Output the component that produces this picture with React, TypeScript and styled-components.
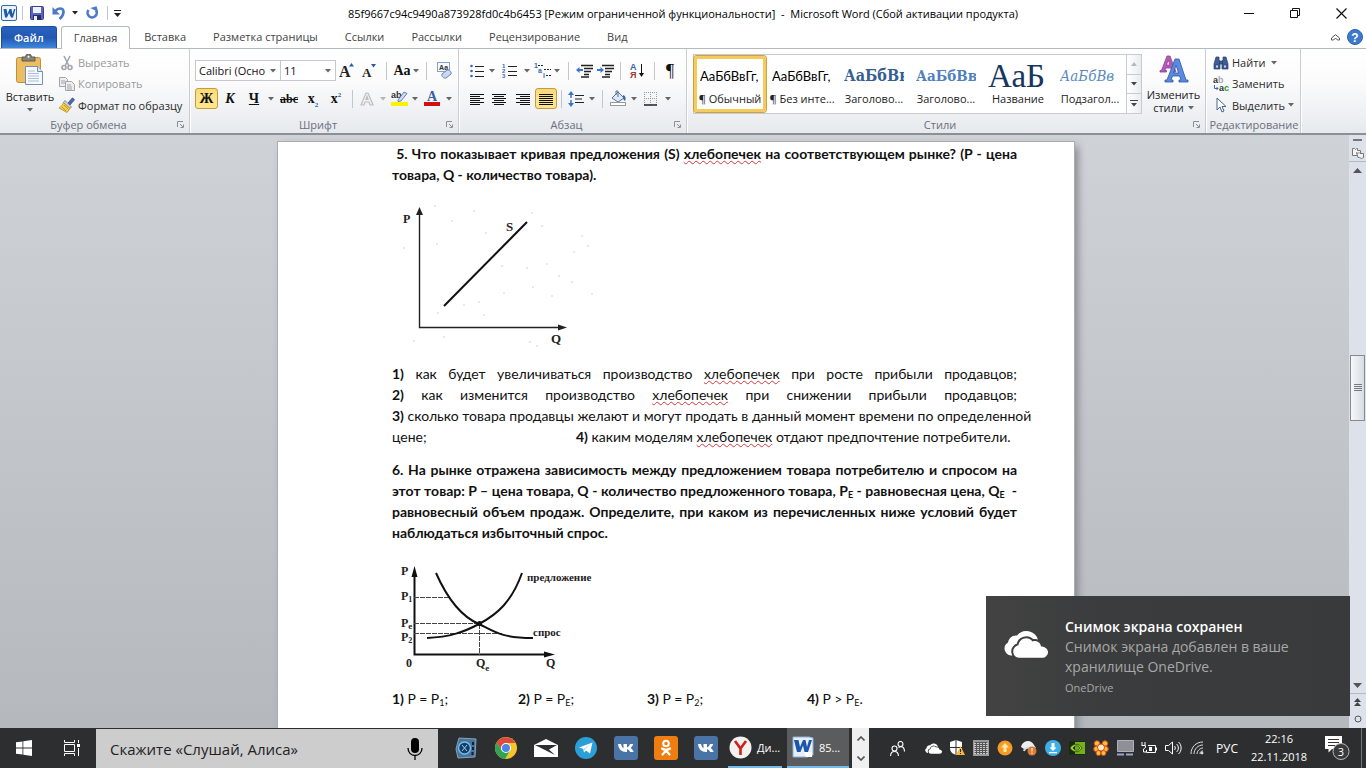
import React from 'react';
import styled, { createGlobalStyle, css } from 'styled-components';

const Global = createGlobalStyle`
  * { box-sizing: border-box; }
  html, body { margin: 0; padding: 0; }
  body { font-family: "Open Sans", "Noto Sans", sans-serif; font-size: 11px; color: #222; overflow: hidden; }
  button, select, input { font: inherit; color: inherit; margin: 0; padding: 0; border: 0; background: none; outline: 0; }
  svg { display: block; flex: none; }
`;

const Screen = styled.div`
  position: relative;
  display: flex;
  flex-direction: column;
  height: 100vh;
  background: #fff;
`;

/* ---------- title bar ---------- */
const TitleBar = styled.header`
  display: grid;
  grid-template-columns: 1fr auto 1fr;
  align-items: center;
  height: 26px;
`;
const QuickAccess = styled.div`
  display: flex;
  align-items: center;
  gap: 4px;
  padding-left: 1px;
  height: 22px;
`;
const IconButton = styled.button<{ $w?: number; $h?: number }>`
  display: flex;
  align-items: center;
  justify-content: center;
  width: ${p => p.$w ?? 22}px;
  height: ${p => p.$h ?? 22}px;
`;
const Title = styled.h1`
  margin: 0;
  font-size: 11px;
  font-weight: 400;
  color: #000;
  white-space: pre;
`;
const WindowButtons = styled.div`
  display: flex;
  justify-content: flex-end;
  padding-right: 2px;
`;
const Divider = styled.span<{ $h?: number; $w?: number }>`
  display: flex;
  justify-content: center;
  width: ${p => p.$w ?? 8}px;
  height: ${p => p.$h ?? 18}px;
  &::before { content: ""; width: 1px; height: 100%; background: #c3c7cd; }
`;

/* ---------- tabs ---------- */
const TabBar = styled.nav`
  display: flex;
  align-items: stretch;
  height: 23px;
  padding-left: 1px;
  border-bottom: 1px solid #b4b9bf;
`;
const Tab = styled.button<{ $kind?: 'file' | 'active' }>`
  padding: 0 13px 0 14px;
  color: #444;
  line-height: 22px;
  font-size: 11px;
  ${p => p.$kind === 'file' && css`
    margin-right: 4px;
    padding: 0 12px;
    color: #fff;
    font-weight: 600;
    border-radius: 3px 3px 0 0;
    border: 1px solid #1c4ea5;
    border-bottom: 0;
    background: linear-gradient(#2a63bd, #2057b3 50%, #3f86dd);
  `}
  ${p => p.$kind === 'active' && css`
    margin-bottom: -1px;
    padding: 0 12px;
    border: 1px solid #b4b9bf;
    border-bottom: 0;
    border-radius: 3px 3px 0 0;
    background: #fff;
  `}
`;
const TabEnd = styled.div`
  display: flex;
  align-items: center;
  gap: 7px;
  margin-left: auto;
  padding-right: 3px;
`;

/* ---------- ribbon ---------- */
const Ribbon = styled.section`
  display: flex;
  height: 86px;
  background: linear-gradient(#fff, #fbfbfc 40%, #e6e9ed);
  border-bottom: 2px solid #8b9097;
`;
const Group = styled.div<{ $w: number }>`
  display: flex;
  flex-direction: column;
  flex: none;
  width: ${p => p.$w}px;
  border-right: 1px solid #c9cdd2;
  box-shadow: 1px 0 0 #fff;
`;
const GroupBody = styled.div<{ $pad?: number }>`
  display: flex;
  flex: 1;
  min-height: 0;
  padding-left: ${p => p.$pad ?? 6}px;
`;
const GroupFoot = styled.div<{ $plain?: boolean }>`
  display: flex;
  align-items: center;
  height: 17px;
  padding: ${p => (p.$plain ? '0 0 0 2px' : '0 5px 0 0')};
  color: #6a6f7c;
  span { flex: 1; text-align: center; white-space: nowrap; }
`;
const Rows = styled.div`
  display: flex;
  flex-direction: column;
  gap: 7px;
  padding-top: 11px;
`;
const Row = styled.div`
  display: flex;
  align-items: center;
  height: 21px;
`;
const Tool = styled.button<{ $w: number; $on?: boolean }>`
  display: flex;
  align-items: center;
  justify-content: center;
  gap: 2px;
  flex: none;
  width: ${p => p.$w}px;
  height: 21px;
  color: #111;
  ${p => p.$on && css`
    border: 1px solid #c29b3c;
    border-radius: 3px;
    background: linear-gradient(#fbd978, #fce48c 50%, #ffe789);
  `}
`;
const Glyph = styled.span<{ $size: number; $bold?: boolean; $italic?: boolean; $line?: string }>`
  font-family: "Liberation Serif", serif;
  font-size: ${p => p.$size}px;
  line-height: 18px;
  font-weight: ${p => (p.$bold ? 700 : 400)};
  font-style: ${p => (p.$italic ? 'italic' : 'normal')};
  text-decoration: ${p => p.$line ?? 'none'};
  sub, sup { font-size: 7px; line-height: 0; color: #2a5db0; }
`;
const Combo = styled.label<{ $w: number }>`
  display: flex;
  align-items: center;
  width: ${p => p.$w}px;
  height: 21px;
  padding: 0 4px 0 3px;
  border: 1px solid #c5c9ce;
  background: #fff;
  & + & { border-left: 0; }
  select { appearance: none; flex: 1; min-width: 0; height: 19px; color: #111; overflow: hidden; }
`;
const PasteButton = styled.button`
  display: flex;
  flex-direction: column;
  align-items: center;
  width: 58px;
  padding-top: 5px;
  line-height: 15px;
  font-size: 11px;
  gap: 4px;
`;
const Commands = styled.div`
  display: flex;
  flex-direction: column;
  padding-top: 3px;
`;
const Command = styled.button<{ $off?: boolean }>`
  display: flex;
  align-items: center;
  gap: 3px;
  height: 22px;
  white-space: nowrap;
  color: ${p => (p.$off ? '#9a9a9a' : '#2b2b2b')};
`;
const Gallery = styled.div`
  display: flex;
  flex: none;
  width: 449px;
  height: 60px;
  margin-top: 5px;
  border: 1px solid #c8ccd1;
  background: #fff;
`;
const StyleItem = styled.button<{ $on?: boolean }>`
  display: flex;
  flex-direction: column;
  align-items: center;
  flex: none;
  width: 72px;
  height: 56px;
  margin-top: 1px;
  padding-top: 3px;
  border: 3px solid transparent;
  ${p => p.$on && css`
    border-color: #f5cb5c;
    border-radius: 3px;
    box-shadow: inset 0 0 0 1px #fff, 0 0 0 1px #c9a24a;
  `}
`;
const Preview = styled.span<{ $font?: string; $size?: number; $color?: string; $bold?: boolean; $italic?: boolean }>`
  width: 60px;
  height: 28px;
  line-height: 28px;
  overflow: hidden;
  white-space: nowrap;
  text-align: left;
  font-family: ${p => p.$font ?? 'Lato, sans-serif'};
  font-size: ${p => p.$size ?? 13}px;
  color: ${p => p.$color ?? '#000'};
  font-weight: ${p => (p.$bold ? 700 : 400)};
  font-style: ${p => (p.$italic ? 'italic' : 'normal')};
`;
const StyleName = styled.span`
  line-height: 18px;
  text-align: center;
  white-space: nowrap;
  font-size: 11px;
`;
const GalleryScroll = styled.div`
  display: flex;
  flex-direction: column;
  margin-left: auto;
  width: 15px;
  border-left: 1px solid #c8ccd1;
  button { flex: 1; display: flex; align-items: center; justify-content: center; background: linear-gradient(90deg, #fff, #e9ecef); }
  button + button { border-top: 1px solid #c8ccd1; }
`;
const ChangeStyles = styled.button`
  display: flex;
  flex-direction: column;
  align-items: center;
  flex: 1;
  padding-top: 6px;
  font-size: 11px;
`;
const Caption = styled.span<{ $top?: boolean }>`
  display: flex;
  align-items: center;
  gap: 4px;
  margin-top: ${p => (p.$top ? 4 : -2)}px;
  line-height: 15px;
`;

/* ---------- document ---------- */
const Workspace = styled.main`
  display: flex;
  flex: 1;
  min-height: 0;
  background: linear-gradient(#cfd2d7, #b5b9be);
`;
const Canvas = styled.div`
  flex: 1;
  min-width: 0;
  overflow: hidden;
  padding: 7px 0 0 3px;
`;
const Page = styled.article`
  width: 796px;
  min-height: 100%;
  margin: 0 auto;
  padding: 1px 56px 40px 114px;
  background: #fff;
  box-shadow: 0 0 0 1px #a9adb2, 4px 4px 8px 0 #84888d;
  font-family: Lato, Carlito, sans-serif;
  font-size: 14px;
  line-height: 21px;
  color: #111;
`;
const Para = styled.div<{ $bold?: boolean; $spaced?: boolean }>`
  width: 625px;
  padding-top: ${p => (p.$spaced ? 12 : 0)}px;
  font-weight: ${p => (p.$bold ? 700 : 400)};
  sub { font-size: 9px; line-height: 0; vertical-align: -2px; }
`;
const Line = styled.div<{ $end?: boolean }>`
  white-space: nowrap;
  height: 21px;
  text-align-last: ${p => (p.$end ? 'left' : 'justify')};
`;
const Cell = styled.span<{ $w: number }>`
  display: inline-block;
  width: ${p => p.$w}px;
`;
const Misspelt = styled.span`
  text-decoration: underline wavy #d8373b 1px;
  text-underline-offset: 1px;
  text-decoration-skip-ink: none;
`;
const Figure = styled.figure<{ $h: number }>`
  margin: 0;
  padding-top: 1px;
  height: ${p => p.$h}px;
  text { font-family: "Liberation Serif", serif; font-weight: 700; fill: #222; }
`;
const ScrollTrack = styled.aside`
  display: flex;
  flex-direction: column;
  align-items: center;
  width: 17px;
  background: #dce1ea;
`;
const ScrollThumb = styled.div`
  display: flex;
  flex-direction: column;
  align-items: center;
  justify-content: center;
  gap: 1px;
  width: 15px;
  height: 66px;
  border: 1px solid #858a92;
  background: linear-gradient(90deg, #f6f8fa, #d8dce2);
  i { width: 8px; height: 1px; background: #777c84; }
`;
const Spacer = styled.div<{ $grow: number }>`
  flex: ${p => p.$grow} 1 0;
`;
const TrackLine = styled.div`
  width: 100%;
  height: 1px;
  background: #b4b9c2;
`;

/* ---------- notification ---------- */
const Toast = styled.section`
  position: absolute;
  right: 16px;
  bottom: 52px;
  display: flex;
  gap: 17px;
  width: 364px;
  height: 120px;
  padding: 21px 16px 0 18px;
  background: linear-gradient(90deg, #434343, #3b3c3d 30%, #393a3b);
  color: #a8a8a8;
  font-size: 14px;
  line-height: 20px;
  h2 { margin: 0; font-size: 14px; font-weight: 600; color: #fff; line-height: 20px; }
  p { margin: 0; }
  small { font-size: 11px; line-height: 22px; }
`;
const ToastIcon = styled.div`
  padding-top: 13px;
`;

/* ---------- taskbar ---------- */
const Taskbar = styled.footer`
  display: flex;
  align-items: stretch;
  height: 40px;
  background: #2d2e2f;
  color: #fff;
`;
const TaskButton = styled.button<{ $w?: number }>`
  display: flex;
  align-items: center;
  justify-content: center;
  flex: none;
  width: ${p => p.$w ?? 40}px;
  height: 40px;
`;
const Search = styled.label`
  display: flex;
  align-items: center;
  width: 342px;
  margin-top: 1px;
  padding: 0 14px;
  background: #cdcdcd;
  color: #222;
  input { flex: 1; min-width: 0; font-size: 15px; }
  input::placeholder { color: #222; opacity: 1; }
`;
const Pinned = styled.div`
  display: flex;
  padding: 0 2px 0 8px;
`;
const Running = styled.button<{ $w: number; $active?: boolean }>`
  display: flex;
  align-items: center;
  gap: 5px;
  flex: none;
  width: ${p => p.$w}px;
  margin-right: ${p => (p.$active ? 3 : 5)}px;
  padding-left: ${p => (p.$active ? 5 : 1)}px;
  border-bottom: 2px solid #76b9ed;
  background: ${p => (p.$active ? '#5b5c5d' : 'transparent')};
  font-size: 11px;
  white-space: nowrap;
`;
const Pager = styled.div`
  display: flex;
  flex-direction: column;
  width: 17px;
  background: #f0f0f0;
  button { flex: 1; display: flex; align-items: center; justify-content: center; }
`;
const Tray = styled.div`
  display: flex;
  align-items: center;
  margin-left: auto;
`;
const Language = styled.button`
  width: 36px;
  font-size: 12px;
`;
const Clock = styled.time`
  width: 68px;
  text-align: center;
  font-size: 11px;
  line-height: 18px;
`;
const ShowDesktop = styled.button`
  width: 5px;
  height: 40px;
  border-left: 1px solid #777;
`;

/* ---------- icons ---------- */
const Caret = ({ c = '#666' }: { c?: string }) => (
  <svg width="6" height="4" viewBox="0 0 6 4"><path d="M0 0h6L3 3.5z" fill={c} /></svg>
);
const Drop = ({ label, off }: { label: string; off?: boolean }) => (
  <Tool $w={10} aria-label={label}><Caret c={off ? '#b5b5b5' : '#666'} /></Tool>
);
const Launcher = () => (
  <svg width="7" height="7" viewBox="0 0 7 7" fill="none" stroke="#8a8f98"><path d="M.5 6V.5H6M3 3l3 3M6.5 3.5v3h-3" /></svg>
);
const WordLogo = () => (
  <svg width="16" height="16" viewBox="0 0 16 16">
    <rect x=".5" y=".5" width="15" height="15" rx="1.5" fill="#eaf3fb" stroke="#2c6bb3" />
    <path d="M2.500 4h3l1 5 2-5h2l1 5 1.500-5h1.500l-2.500 8.500h-2L8 8l-2 4.500H4z" fill="#1f5aa8" />
  </svg>
);
const SaveIcon = () => (
  <svg width="14" height="14" viewBox="0 0 14 14">
    <rect x=".5" y=".5" width="13" height="13" rx="1" fill="#5c64c2" stroke="#3a4196" />
    <rect x="3" y="1" width="8" height="6" fill="#eef2fb" /><rect x="3" y="9" width="8" height="5" fill="#272c66" /><rect x="4" y="10" width="3" height="4" fill="#e8ecf8" />
  </svg>
);
const UndoIcon = () => (
  <svg width="14" height="14" viewBox="0 0 14 14">
    <path d="M3.500 5C6 1.500 11.500 1.500 11.500 6c0 3-1.500 5-4 7" fill="none" stroke="#4a7bcb" strokeWidth="2.600" /><path d="M.5 1v7.500H8z" fill="#4a7bcb" />
  </svg>
);
const RedoIcon = () => (
  <svg width="14" height="14" viewBox="0 0 14 14">
    <path d="M3.500 4a4.600 4.600 0 1 0 7.500.3" fill="none" stroke="#4a7bcb" strokeWidth="2.600" /><path d="M6 1h6.500v6z" fill="#4a7bcb" transform="rotate(-15 9 4)" />
  </svg>
);
const PasteIcon = () => (
  <svg width="28" height="31" viewBox="0 0 28 31">
    <rect x=".5" y="3.500" width="24" height="25" rx="2" fill="#edbd62" stroke="#c08f3a" />
    <path d="M6 7V3h3.500a3 3 0 0 1 6 0H19v4z" fill="#8a8378" stroke="#5e5a52" /><circle cx="12.500" cy="2.800" r="1" fill="#fff" />
    <path d="M9.500 12.500h12l5 5v13h-17z" fill="#f7fafd" stroke="#7490b8" /><path d="M21.500 12.500v5h5" fill="#dbe6f3" stroke="#7490b8" />
    <path d="M12 17h7M12 19.500h11M12 22h11M12 24.500h11M12 27h11" stroke="#a9bdd8" />
  </svg>
);
const CutIcon = () => (
  <svg width="16" height="16" viewBox="0 0 16 16" fill="none" stroke="#a3a5aa" strokeWidth="1.600">
    <path d="M5 1l5 10M11 1L6 11" /><circle cx="5" cy="12.500" r="2" /><circle cx="11" cy="12.500" r="2" />
  </svg>
);
const CopyIcon = () => (
  <svg width="16" height="14" viewBox="0 0 16 14" fill="#eee" stroke="#a3a5aa">
    <path d="M.5.5h6l2 2v7h-8z" /><path d="M6.500 4.500h6l3 3v6h-9z" /><path d="M2 4h4M2 6h4M8 8h4M8 10h5M8 12h5" />
  </svg>
);
const BrushIcon = () => (
  <svg width="16" height="16" viewBox="0 0 16 16">
    <path d="M9 6L13.500.8l2 2L11 8z" fill="#4b67ae" stroke="#2e4580" strokeWidth=".7" />
    <path d="M6 3.500L12.500 10 11 11.500l-6.500-6z" fill="#d5d6de" stroke="#666" strokeWidth=".7" />
    <path d="M4.500 5.500l6.500 6L8 15.500 0 11c2-1 3.500-3 4.500-5.500z" fill="#f0cf4d" stroke="#a98322" strokeWidth=".7" />
    <path d="M3 10l4 4M5 8l4.500 4.500" stroke="#a98322" strokeWidth=".7" />
  </svg>
);
const GrowIcon = ({ up, size }: { up?: boolean; size: number }) => (
  <svg width="18" height="18" viewBox="0 0 18 18">
    <text x="0" y="15" fontFamily="Liberation Serif" fontWeight="700" fontSize={size} fill="#222">А</text>
    <path d={up ? 'M10 4.500L12.500 1 15 4.500z' : 'M9 2h5l-2.500 3.500z'} fill="#2b5aa8" />
  </svg>
);
const ClearIcon = () => (
  <svg width="17" height="17" viewBox="0 0 17 17">
    <rect x="1.500" y=".5" width="12" height="9" fill="#f6f9fd" stroke="#8aa2c8" /><text x="3" y="8" fontFamily="Liberation Sans" fontWeight="700" fontSize="7" fill="#333">Аа</text>
    <path d="M6 12l5-4c2-1 5 2 4 4l-5 4c-2 1-5-2-4-4z" fill="#c9d8ef" stroke="#6583b5" />
  </svg>
);
const OutlineA = () => (
  <svg width="16" height="16" viewBox="0 0 16 16"><path d="M2 14L7 2h2l5 12h-3l-1-3H6l-1 3zM7 8.500h2L8 5.500z" fill="#f2f2f2" stroke="#bdbdbd" strokeWidth="1.200" /></svg>
);
const HighlightIcon = () => (
  <svg width="17" height="17" viewBox="0 0 17 17">
    <rect y="12" width="17" height="4" fill="#fff200" /><text x="0" y="8" fontFamily="Liberation Sans" fontSize="9" fontWeight="700" fill="#333">ab</text>
    <path d="M7 10l6-8 3 1.500-6 7.500-3 .5z" fill="#cfdcf0" stroke="#4a6aa0" strokeWidth=".8" />
  </svg>
);
const FontColorIcon = () => (
  <svg width="16" height="17" viewBox="0 0 16 17">
    <text x="3" y="11" fontFamily="Liberation Serif" fontWeight="700" fontSize="14" fill="#3a5fa5">А</text><rect y="12" width="16" height="4" fill="#cf1010" />
  </svg>
);
const BulletsIcon = () => (
  <svg width="14" height="14" viewBox="0 0 14 14"><path d="M5 2.500h9M5 7.500h9M5 12.500h9" stroke="#222" /><g fill="#3a66b0"><circle cx="1.500" cy="2" r="1.300" /><circle cx="1.500" cy="7" r="1.300" /><circle cx="1.500" cy="12" r="1.300" /></g></svg>
);
const NumbersIcon = () => (
  <svg width="15" height="15" viewBox="0 0 15 15"><path d="M6 3.500h9M6 8.500h9M6 12.500h9" stroke="#222" /><g fontFamily="Liberation Sans" fontWeight="700" fontSize="6" fill="#3a66b0"><text x="0" y="5">1</text><text x="0" y="10">2</text><text x="0" y="15">3</text></g></svg>
);
const MultiIcon = () => (
  <svg width="17" height="15" viewBox="0 0 17 15"><path d="M4 2.500h6M10 6.500h7M12 12.500h5" stroke="#222" strokeDasharray="2 1" /><g fontFamily="Liberation Sans" fontWeight="700" fontSize="7" fill="#3a66b0"><text x="0" y="5">1</text><text x="4" y="10">a</text><text x="9" y="15">i</text></g></svg>
);
const IndentIcon = ({ right }: { right?: boolean }) => (
  <svg width="17" height="14" viewBox="0 0 17 14"><path d="M5 1.500h12M8 4.500h9M8 7.500h7M8 10.500h5M5 13h8" stroke="#222" strokeWidth="1.300" /><path d={right ? 'M7 6L3.500 3v2H0v2h3.500v2z' : 'M0 6l3.500-3v2H7v2H3.500v2z'} fill="#3a75cc" /></svg>
);
const SortIcon = () => (
  <svg width="15" height="17" viewBox="0 0 15 17"><g fontFamily="Liberation Sans" fontWeight="700" fontSize="9"><text x="0" y="8" fill="#3a5fa5">А</text><text x="0" y="16" fill="#a03535">Я</text></g><path d="M11.500 2v12" stroke="#111" /><path d="M9 11h5l-2.500 4z" fill="#111" /></svg>
);
const AlignIcon = ({ mode }: { mode: 'l' | 'c' | 'r' | 'j' }) => {
  const short = { l: 'M0', c: 'M2', r: 'M4', j: 'M0' }[mode];
  const len = mode === 'j' ? 14 : 10;
  return (
    <svg width="14" height="12" viewBox="0 0 14 12"><path d={`M0 1.500h14${short} 3.500h${len}M0 5.500h14${short} 7.500h${len}M0 9.500h14${short} 11.500h${len}`} stroke="#111" /></svg>
  );
};
const SpacingIcon = () => (
  <svg width="16" height="16" viewBox="0 0 16 16"><path d="M7 4.500h9M7 8h7M7 11.500h9" stroke="#222" strokeWidth="1.200" /><path d="M3 3v4M3 9v4" stroke="#3a75cc" strokeWidth="1.500" /><path d="M0 4l3-4 3 4zM0 12l3 4 3-4z" fill="#3a75cc" /></svg>
);
const BucketIcon = () => (
  <svg width="17" height="17" viewBox="0 0 17 17"><path d="M2 8l6-6 6 6-6 4z" fill="#dfe9f7" stroke="#55709f" /><path d="M6 5V1h2v6" fill="none" stroke="#55709f" /><path d="M13 5c3 1 3 4 2 6-2-1-2-3-2-6z" fill="#3a66b0" /><rect x=".5" y="12.500" width="15" height="3" fill="#fff" stroke="#999" /></svg>
);
const BordersIcon = () => (
  <svg width="14" height="14" viewBox="0 0 14 14" fill="none"><path d="M.5 0v13M6.500 0v13M12.500 0v13M0 .5h13M0 6.500h13" stroke="#999" strokeDasharray="1 1" /><path d="M0 13h13" stroke="#222" strokeWidth="1.500" /></svg>
);
const StylesIcon = () => (
  <svg width="30" height="28" viewBox="0 0 30 28">
    <path d="M1 17v-1.500h1.500L8 1h3l6 16h-4l-1-4H6.500L6 15.500h1.500V17zM7.500 10h3.500L9.200 5z" fill="#b65bb8" stroke="#8a3d92" strokeWidth=".8" />
    <path d="M6 27v-2h2L16 4h4l7 21h2v2h-9v-2h2l-1.500-4h-7L12 25h2v2zM14.500 18h5L17 10z" fill="#5a8be0" stroke="#2c57a6" strokeWidth=".8" />
  </svg>
);
const FindIcon = () => (
  <svg width="16" height="14" viewBox="0 0 16 14" fill="#3e5d94" stroke="#24406f" strokeWidth=".7"><path d="M3 1h3v3l1 1v8H1V8zM10 1h3l2 7v5H9V5l1-1z" /><path d="M6.500 5h3v3h-3z" /><path d="M2.500 9h3v3h-3zM10.500 9h3v3h-3z" fill="#c3d3ed" /></svg>
);
const ReplaceIcon = () => (
  <svg width="16" height="16" viewBox="0 0 16 16" fontFamily="Liberation Sans" fontWeight="700" fontSize="9"><text x="0" y="7" fill="#333">a<tspan fill="#aaa">b</tspan></text><text x="6" y="15" fill="#333">a<tspan fill="#1f9a35">c</tspan></text><path d="M1.500 9v3.500H5M3.500 11l1.500 1.500L3.500 14" fill="none" stroke="#3a66b0" /></svg>
);
const CursorIcon = () => (
  <svg width="16" height="16" viewBox="0 0 16 16"><path d="M4 1v12l3-3 2 5 2-1-2-4.500h4z" fill="#fff" stroke="#4a638f" /></svg>
);
const HelpIcon = () => (
  <svg width="16" height="16" viewBox="0 0 16 16"><circle cx="8" cy="8" r="7.500" fill="#3d79cc" stroke="#2c60aa" /><text x="8" y="12.500" textAnchor="middle" fontFamily="Liberation Sans" fontWeight="700" fontSize="12" fill="#fff">?</text></svg>
);
const Vk = () => (
  <svg width="24" height="24" viewBox="0 0 24 24"><rect width="24" height="24" rx="3" fill="#4a74a5" /><path d="M4 8h3c.5 2 1.500 4 2.500 4.500V8H13v3.500C14.500 11 15.500 9 16 8h3.200c-.5 2-2 3.500-2.700 4 1 .6 2.500 2 3.200 4h-3.500c-.6-1.500-1.800-2.600-3.200-2.800V16h-1C7.500 16 4.500 13 4 8z" fill="#fff" /></svg>
);
const Cloud = ({ w = 44, h = 28, gap = '#404040' }: { w?: number; h?: number; gap?: string }) => (
  <svg width={w} height={h} viewBox="0 0 44 28">
    <path d="M7 25.500a7 7 0 0 1-3-13C5 8 8 5 13 5.500a12 12 0 0 1 21 4.500l2 6-20 10z" fill="#fff" />
    <path d="M16 27.800a6.300 6.300 0 0 1-1.500-12.500C15 8.500 24 5.500 28.500 11.500c4-1.500 8 1 8.500 5 4 0 7 2.500 7 5.500 0 3.500-3 5.800-6 5.800z" fill="#fff" stroke={gap} strokeWidth="4" paintOrder="stroke" />
  </svg>
);

/* ---------- data ---------- */
const tabs = ['Вставка', 'Разметка страницы', 'Ссылки', 'Рассылки', 'Рецензирование', 'Вид'];
const cambria = '"DejaVu Serif Condensed", "DejaVu Serif", serif';
const galleryItems = [
  { name: '¶ Обычный', text: 'АаБбВвГг,', on: true },
  { name: '¶ Без инте...', text: 'АаБбВвГг,' },
  { name: 'Заголово...', text: 'АаБбВв', font: cambria, size: 16, color: '#365f91', bold: true },
  { name: 'Заголово...', text: 'АаБбВв', font: cambria, size: 15, color: '#4f81bd', bold: true },
  { name: 'Название', text: 'АаБ', font: '"Liberation Serif", serif', size: 33, color: '#17365d' },
  { name: 'Подзагол...', text: 'АаБбВв', font: cambria, size: 15, color: '#5b8bc0', italic: true },
];

const Foot = ({ text, launcher = true }: { text: string; launcher?: boolean }) => (
  <GroupFoot $plain={!launcher}><span>{text}</span>{launcher && <Launcher />}</GroupFoot>
);

const Speckles = ({ pts }: { pts: number[][] }) => (
  <g fill="#ccc">{pts.map(([x, y]) => <circle key={`${x}-${y}`} cx={x} cy={y} r=".8" />)}</g>
);

const SupplyChart = () => (
  <Figure $h={178}>
    <svg width="210" height="170" viewBox="0 0 210 170" role="img" aria-label="Кривая предложения S">
      <Speckles pts={[[43, 20], [60, 35], [45, 58], [12, 62], [82, 25], [140, 27], [150, 40], [190, 50], [196, 60], [94, 47], [110, 80], [135, 82], [155, 78], [167, 90], [180, 96], [112, 107], [141, 101], [200, 108], [87, 116], [92, 129], [72, 119], [46, 127], [52, 151], [160, 110], [138, 156], [22, 155], [145, 160], [182, 66]]} />
      <path d="M27.500 28V141.500H168" fill="none" stroke="#222" strokeWidth="1.400" />
      <path d="M27.500 21l3.500 8h-7zM175 141.500l-9 3v-6z" fill="#222" />
      <path d="M52 120L135 36" stroke="#111" strokeWidth="2" />
      <g style={{ fontWeight: 400 }}>
        <text x="11" y="37" fontSize="12">P</text><text x="114" y="45" fontSize="13">S</text><text x="159" y="157" fontSize="13">Q</text>
      </g>
    </svg>
  </Figure>
);

const MarketChart = () => (
  <Figure $h={145}>
    <svg width="210" height="140" viewBox="0 0 210 140" role="img" aria-label="Спрос и предложение">
      <path d="M22.500 30V110.500H154" fill="none" stroke="#111" strokeWidth="2" />
      <path d="M22.500 22l3 11h-6zM163 110.500l-11 3v-6z" fill="#111" />
      <path d="M22 53.500h36M22 79.500h65M22 89.500h88M87.500 80v31" stroke="#444" strokeDasharray="5 1" />
      <path d="M44 29C56 56 70 73 87 80C103 88 110 94 141 94" fill="none" stroke="#111" strokeWidth="2" />
      <path d="M35 94C58 93 72 88 87 80C106 70 120 57 130 29" fill="none" stroke="#111" strokeWidth="2" />
      <circle cx="87.500" cy="79.500" r="2.500" fill="#111" />
      <g fontSize="12">
        <text x="9" y="31">P</text>
        <text x="9" y="56">P<tspan fontSize="8" dy="2">1</tspan></text>
        <text x="9" y="83">P<tspan fontSize="9" dy="2">e</tspan></text>
        <text x="9" y="97">P<tspan fontSize="8" dy="2">2</tspan></text>
        <text x="14" y="123">0</text>
        <text x="84" y="123">Q<tspan fontSize="9" dy="4">e</tspan></text>
        <text x="154" y="123">Q</text>
        <text x="135" y="37" fontSize="11">предложение</text>
        <text x="141" y="92" fontSize="11">спрос</text>
      </g>
    </svg>
  </Figure>
);

export default function App() {
  return (
    <Screen>
      <Global />
      <TitleBar>
        <QuickAccess>
          <WordLogo />
          <Divider $w={3} $h={14} />
          <IconButton $w={18} aria-label="Сохранить"><SaveIcon /></IconButton>
          <IconButton $w={18} aria-label="Отменить"><UndoIcon /></IconButton>
          <IconButton $w={6} aria-label="Список отмены"><Caret c="#222" /></IconButton>
          <IconButton $w={20} aria-label="Повторить"><RedoIcon /></IconButton>
          <Divider $w={3} $h={14} />
          <IconButton $w={8} aria-label="Настройка панели">
            <svg width="7" height="7" viewBox="0 0 7 7"><path d="M0 .5h7" stroke="#222" /><path d="M0 3h7L3.500 7z" fill="#222" /></svg>
          </IconButton>
        </QuickAccess>
        <Title>85f9667c94c9490a873928fd0c4b6453 [Режим ограниченной функциональности]  -  Microsoft Word (Сбой активации продукта)</Title>
        <WindowButtons>
          <IconButton $w={46} aria-label="Свернуть"><svg width="11" height="11"><path d="M0 5.500h10" stroke="#111" /></svg></IconButton>
          <IconButton $w={46} aria-label="Восстановить"><svg width="11" height="11" fill="none" stroke="#111"><path d="M.5 2.500h7v7h-7zM2.500 2.500v-2h7v7h-2" /></svg></IconButton>
          <IconButton $w={46} aria-label="Закрыть"><svg width="11" height="11" stroke="#111" strokeWidth="1.200"><path d="M.5.5l10 10M10.500.5l-10 10" /></svg></IconButton>
        </WindowButtons>
      </TitleBar>

      <TabBar>
        <Tab $kind="file">Файл</Tab>
        <Tab $kind="active">Главная</Tab>
        {tabs.map(t => <Tab key={t}>{t}</Tab>)}
        <TabEnd>
          <svg width="9" height="7" viewBox="0 0 9 7" fill="none" stroke="#555"><path d="M.5 4L4.500.7 8.500 4v2H6.500L4.500 4 2.500 6h-2z" /></svg>
          <HelpIcon />
        </TabEnd>
      </TabBar>

      <Ribbon>
        <Group $w={190}>
          <GroupBody $pad={1}>
            <PasteButton><PasteIcon /><span>Вставить</span><Caret /></PasteButton>
            <Commands>
              <Command $off><CutIcon />Вырезать</Command>
              <Command $off><CopyIcon />Копировать</Command>
              <Command><BrushIcon />Формат по образцу</Command>
            </Commands>
          </GroupBody>
          <Foot text="Буфер обмена" />
        </Group>

        <Group $w={269}>
          <GroupBody $pad={5}>
            <Rows>
              <Row>
                <Combo $w={86}><select aria-label="Шрифт"><option>Calibri (Осно</option></select><Caret /></Combo>
                <Combo $w={55}><select aria-label="Размер"><option>11</option></select><Caret /></Combo>
                <Tool $w={24} aria-label="Увеличить размер"><GrowIcon up size={16} /></Tool>
                <Tool $w={22} aria-label="Уменьшить размер"><GrowIcon size={13} /></Tool>
                <Divider />
                <Tool $w={32} aria-label="Регистр"><Glyph $size={14} $bold>Aa</Glyph><Caret /></Tool>
                <Divider />
                <Tool $w={28} aria-label="Очистить формат"><ClearIcon /></Tool>
              </Row>
              <Row>
                <Tool $w={23} $on><Glyph $size={14} $bold>Ж</Glyph></Tool>
                <Tool $w={24}><Glyph $size={14} $bold $italic>К</Glyph></Tool>
                <Tool $w={24}><Glyph $size={14} $bold $line="underline">Ч</Glyph></Tool>
                <Drop label="Подчеркивание" />
                <Tool $w={26}><Glyph $size={12} $bold $line="line-through">abc</Glyph></Tool>
                <Tool $w={22}><Glyph $size={14} $bold>x<sub>2</sub></Glyph></Tool>
                <Tool $w={24}><Glyph $size={14} $bold>x<sup>2</sup></Glyph></Tool>
                <Divider />
                <Tool $w={22} aria-label="Эффекты текста"><OutlineA /></Tool>
                <Drop label="Эффекты" off />
                <Tool $w={22} aria-label="Цвет выделения"><HighlightIcon /></Tool>
                <Drop label="Выделение" />
                <Tool $w={24} aria-label="Цвет текста"><FontColorIcon /></Tool>
                <Drop label="Цвет" />
              </Row>
            </Rows>
          </GroupBody>
          <Foot text="Шрифт" />
        </Group>

        <Group $w={228}>
          <GroupBody $pad={7}>
            <Rows>
              <Row>
                <Tool $w={21} aria-label="Маркеры"><BulletsIcon /></Tool><Drop label="Маркеры, список" />
                <Tool $w={25} aria-label="Нумерация"><NumbersIcon /></Tool><Drop label="Нумерация, список" />
                <Tool $w={20} aria-label="Многоуровневый список"><MultiIcon /></Tool><Drop label="Уровни" />
                <Divider $w={12} />
                <Tool $w={21} aria-label="Уменьшить отступ"><IndentIcon /></Tool>
                <Tool $w={21} aria-label="Увеличить отступ"><IndentIcon right /></Tool>
                <Divider />
                <Tool $w={26} aria-label="Сортировка"><SortIcon /></Tool>
                <Divider />
                <Tool $w={24}><Glyph $size={18}>¶</Glyph></Tool>
              </Row>
              <Row>
                <Tool $w={21} aria-label="По левому краю"><AlignIcon mode="l" /></Tool>
                <Tool $w={24} aria-label="По центру"><AlignIcon mode="c" /></Tool>
                <Tool $w={24} aria-label="По правому краю"><AlignIcon mode="r" /></Tool>
                <Tool $w={22} $on aria-label="По ширине"><AlignIcon mode="j" /></Tool>
                <Divider />
                <Tool $w={22} aria-label="Интервал"><SpacingIcon /></Tool><Drop label="Интервал, список" />
                <Divider $w={10} />
                <Tool $w={22} aria-label="Заливка"><BucketIcon /></Tool><Drop label="Заливка, список" />
                <Tool $w={24} aria-label="Границы"><BordersIcon /></Tool><Drop label="Границы, список" />
              </Row>
            </Rows>
          </GroupBody>
          <Foot text="Абзац" />
        </Group>

        <Group $w={519}>
          <GroupBody>
            <Gallery>
              {galleryItems.map((s, i) => (
                <StyleItem key={i} $on={s.on}>
                  <Preview $font={s.font} $size={s.size} $color={s.color} $bold={s.bold} $italic={s.italic}>{s.text}</Preview>
                  <StyleName>{s.name}</StyleName>
                </StyleItem>
              ))}
              <GalleryScroll>
                <button aria-label="Вверх"><svg width="6" height="4"><path d="M0 4h6L3 0z" fill="#b5b8bc" /></svg></button>
                <button aria-label="Вниз"><Caret c="#444" /></button>
                <button aria-label="Все стили"><svg width="8" height="7"><path d="M0 .5h8" stroke="#444" /><path d="M1 3h6L4 6.500z" fill="#444" /></svg></button>
              </GalleryScroll>
            </Gallery>
            <ChangeStyles>
              <StylesIcon />
              <Caption $top>Изменить</Caption>
              <Caption>стили<Caret /></Caption>
            </ChangeStyles>
          </GroupBody>
          <Foot text="Стили" />
        </Group>

        <Group $w={95}>
          <GroupBody $pad={7}>
            <Commands>
              <Command><FindIcon />Найти&nbsp;<Caret /></Command>
              <Command><ReplaceIcon />Заменить</Command>
              <Command><CursorIcon />Выделить<Caret /></Command>
            </Commands>
          </GroupBody>
          <Foot text="Редактирование" launcher={false} />
        </Group>
      </Ribbon>

      <Workspace>
        <Canvas>
          <Page>
            <Para $bold>
              <Line>&nbsp;5. Что показывает кривая предложения (S) <Misspelt>хлебопечек</Misspelt> на соответствующем рынке? (P - цена</Line>
              <Line $end>товара, Q - количество товара).</Line>
            </Para>
            <SupplyChart />
            <Para>
              <Line><b>1)</b> как будет увеличиваться производство <Misspelt>хлебопечек</Misspelt> при росте прибыли продавцов;</Line>
              <Line><b>2)</b> как изменится производство <Misspelt>хлебопечек</Misspelt> при снижении прибыли продавцов;</Line>
              <Line><b>3)</b> сколько товара продавцы желают и могут продать в данный момент времени по определенной</Line>
              <Line $end><Cell $w={184}>цене;</Cell><b>4)</b> каким моделям <Misspelt>хлебопечек</Misspelt> отдают предпочтение потребители.</Line>
            </Para>
            <Para $bold $spaced>
              <Line>6. На рынке отражена зависимость между предложением товара потребителю и спросом на</Line>
              <Line>этот товар: P – цена товара, Q - количество предложенного товара, P<sub>E</sub> - равновесная цена, Q<sub>E</sub>&nbsp; -</Line>
              <Line>равновесный объем продаж. Определите, при каком из перечисленных ниже условий будет</Line>
              <Line $end>наблюдаться избыточный спрос.</Line>
            </Para>
            <MarketChart />
            <Para>
              <Line $end>
                <Cell $w={126}><b>1)</b> P = P<sub>1</sub>;</Cell>
                <Cell $w={129}><b>2)</b> P = P<sub>E</sub>;</Cell>
                <Cell $w={160}><b>3)</b> P = P<sub>2</sub>;</Cell>
                <Cell $w={120}><b>4)</b> P &gt; P<sub>E</sub>.</Cell>
              </Line>
            </Para>
          </Page>
        </Canvas>
        <ScrollTrack>
          <IconButton $w={17} $h={10} aria-label="Разделить"><svg width="9" height="2"><path d="M0 1h9" stroke="#777" strokeWidth="2" /></svg></IconButton>
          <IconButton $w={17} $h={16} aria-label="Линейка"><svg width="12" height="12" fill="#f4f4f4" stroke="#777"><path d="M.5 1.500h2l1 1 1-1h1v2h3v5h-8z" /><path d="M4.500 5.500l1.500 1 1-1 1 1h3.500v4l-2 1-2-1H6z" /></svg></IconButton>
          <TrackLine />
          <IconButton $w={17} $h={16} aria-label="Прокрутить вверх"><svg width="9" height="5"><path d="M0 5h9L4.500 0z" fill="#555" /></svg></IconButton>
          <Spacer $grow={67} />
          <ScrollThumb><i /><i /><i /><i /></ScrollThumb>
          <Spacer $grow={97} />
          <IconButton $w={17} $h={16} aria-label="Прокрутить вниз"><svg width="9" height="5"><path d="M0 0h9L4.500 5z" fill="#555" /></svg></IconButton>
          <TrackLine />
          <IconButton $w={17} $h={16} aria-label="Предыдущая страница"><svg width="7" height="8" fill="#444"><path d="M0 4h7L3.500 0zM0 8h7L3.500 4z" /></svg></IconButton>
          <IconButton $w={17} $h={18} aria-label="Выбор объекта"><svg width="8" height="8"><circle cx="4" cy="4" r="3" fill="none" stroke="#555" /></svg></IconButton>
        </ScrollTrack>
      </Workspace>

      <Toast>
        <ToastIcon><Cloud /></ToastIcon>
        <div>
          <h2>Снимок экрана сохранен</h2>
          <p>Снимок экрана добавлен в ваше<br />хранилище OneDrive.</p>
          <small>OneDrive</small>
        </div>
      </Toast>

      <Taskbar>
        <TaskButton $w={48} aria-label="Пуск"><svg width="16" height="16" fill="#fff"><path d="M0 2.300l6.500-.9v6.200H0zM7.300 1.300L16 0v7.600H7.300zM0 8.400h6.500v6.200L0 13.700zM7.300 8.400H16V16l-8.700-1.300z" /></svg></TaskButton>
        <TaskButton $w={48} aria-label="Представление задач"><svg width="17" height="16" fill="none" stroke="#fff"><path d="M.5 0v2.500h10V0M.5 4.500h10v7H.5zM.5 16v-2.500h10V16M14.500 0v3M14.500 8v8" /><path d="M13 4h3v3h-3z" fill="#fff" stroke="none" /></svg></TaskButton>
        <Search>
          <input aria-label="Поиск" placeholder="Скажите «Слушай, Алиса»" />
          <svg width="18" height="22" viewBox="0 0 18 22"><rect x="5" y="0" width="8" height="15" rx="4" fill="#000" /><path d="M2 10c0 10 14 10 14 0M9 17.500V22" fill="none" stroke="#000" strokeWidth="1.300" /></svg>
        </Search>
        <Pinned>
          <TaskButton aria-label="Видеоплеер"><svg width="22" height="22" viewBox="0 0 22 22"><path d="M4 1l17 1-1 18-17 1-2-9z" fill="#4d7496" stroke="#7fa6c6" /><circle cx="9.500" cy="11" r="6" fill="#173d63" stroke="#6cc0f0" strokeWidth="1.500" /><path d="M7 8l5 6M12 8l-5 6" stroke="#9bd4f5" /><path d="M18 5v3M18 10v3M17.500 15v3" stroke="#102030" strokeWidth="2" /></svg></TaskButton>
          <TaskButton aria-label="Chrome"><svg width="22" height="22" viewBox="0 0 22 22"><circle cx="11" cy="11" r="11" fill="#f7c52b" /><path d="M1.500 5.500A11 11 0 0 1 20.500 6H11L6.700 13.500z" fill="#dd4b3e" /><path d="M1.500 5.500A11 11 0 0 0 10 22l5-8.500H6.700z" fill="#2fa457" /><circle cx="11" cy="11" r="5" fill="#fff" /><circle cx="11" cy="11" r="4" fill="#4a86e8" /></svg></TaskButton>
          <TaskButton aria-label="Почта"><svg width="24" height="20" viewBox="0 0 24 20"><path d="M0 7L12 1l12 6v12H0z" fill="#fff" /><path d="M1 7h22l-8 4.500L21 17 10 11.500z" fill="#2d2e2f" /></svg></TaskButton>
          <TaskButton aria-label="Telegram"><svg width="22" height="22" viewBox="0 0 22 22"><circle cx="11" cy="11" r="11" fill="#2ba0d8" /><path d="M4 10.500L17.500 5.500 15 16.500l-4-3-2 2-.6-3.500z" fill="#fff" /><path d="M8.400 12L15 7.500 9.500 13 9 15.500z" fill="#b8d8ea" /></svg></TaskButton>
          <TaskButton aria-label="ВКонтакте"><Vk /></TaskButton>
          <TaskButton aria-label="Одноклассники"><svg width="24" height="24" viewBox="0 0 24 24"><rect width="24" height="24" rx="3" fill="#ee7d12" /><circle cx="12" cy="7.500" r="2.800" fill="none" stroke="#fff" strokeWidth="2" /><path d="M8 12.500c3 2 5 2 8 0M12 14.500l-3.500 4M12 14.500l3.500 4" fill="none" stroke="#fff" strokeWidth="2.200" strokeLinecap="round" /></svg></TaskButton>
          <TaskButton aria-label="ВКонтакте"><Vk /></TaskButton>
        </Pinned>
        <Running $w={54}>
          <svg width="23" height="23" viewBox="0 0 23 23"><circle cx="11.500" cy="11.500" r="11" fill="#f4f2f0" /><path d="M6 5l5.500 7.500L17 5M11.500 12v7" fill="none" stroke="#d0201a" strokeWidth="2.600" /></svg>Ди...
        </Running>
        <Running $w={62} $active>
          <svg width="22" height="22" viewBox="0 0 22 22"><path d="M1 1h16l4 1v17l-6 2H1z" fill="#e6eef9" stroke="#8fb0dc" /><path d="M2 4h4.500l1.500 7 3-7h2.500l1.500 7 2-7h3l-4 12h-3.500L11 9.500 8.500 16H5z" fill="#1d55a8" /><path d="M12 16h8v5h-6z" fill="#fff" /></svg>85...
        </Running>
        <Pager>
          <button aria-label="Вверх"><svg width="8" height="5" fill="none" stroke="#555" strokeWidth="1.600"><path d="M.5 4.500L4 1l3.500 3.500" /></svg></button>
          <button aria-label="Вниз"><svg width="8" height="5" fill="none" stroke="#555" strokeWidth="1.600"><path d="M.5.5L4 4 7.500.5" /></svg></button>
        </Pager>
        <Tray>
          <TaskButton $w={48} aria-label="Люди"><svg width="15" height="15" fill="none" stroke="#fff" strokeWidth="1.100"><circle cx="4.500" cy="7.500" r="2.500" /><path d="M.6 15c0-6 7.800-6 7.800 0" /><circle cx="10.500" cy="3" r="2.500" /><path d="M8.500 6.500c3-2 6-.5 6 4" /></svg></TaskButton>
          <TaskButton $w={24} aria-label="OneDrive"><Cloud w={17} h={11} gap="#2d2e2f" /></TaskButton>
          <TaskButton $w={24} aria-label="Защитник"><svg width="16" height="16"><path d="M1 2l6-2 6 2v6c0 4-3 6-6 7-3-1-6-3-6-7z" fill="#fff" /><path d="M7 0v15M1 7.500h12" stroke="#2d2e2f" /><path d="M11.500 6l4.500 9H7z" fill="#f6b73c" /><path d="M11.500 9v3M11.500 13v1" stroke="#222" /></svg></TaskButton>
          <TaskButton $w={24} aria-label="Процессор"><svg width="16" height="16"><path d="M0 0h16v16H0z" fill="#999" /><path d="M2 2h12v12H2z" fill="#555" /><path d="M1 3.500h14M1 5.500h14M1 7.500h14M1 9.500h14M1 11.500h14M1 13.500h14" stroke="#ccc" strokeDasharray="2 1" /></svg></TaskButton>
          <TaskButton $w={24} aria-label="Обновление"><svg width="16" height="16"><circle cx="8" cy="8" r="7.500" fill="#f39a28" /><path d="M8 3l4 4.500H9.500V12h-3V7.500H4z" fill="#ffe9a8" /></svg></TaskButton>
          <TaskButton $w={24} aria-label="Состояние"><svg width="16" height="16"><path d="M0 7c2-7 10-8 13-2l2 3-6-1-6 2z" fill="#eee" /><path d="M3 11c1-4 5-4 7-2" stroke="#ddd" strokeWidth="2" fill="none" /><circle cx="11" cy="11" r="4.500" fill="#d97a35" /><path d="M11 8v3.500M11 12.500v1.500" stroke="#fff" /></svg></TaskButton>
          <TaskButton $w={24} aria-label="Загрузка"><svg width="16" height="16"><circle cx="8" cy="8" r="8" fill="#3cb0e6" /><path d="M8 11L4.500 7.500h2V3h3v4.500h2zM4 12h8v1.200H4z" fill="#fff" /></svg></TaskButton>
          <TaskButton $w={24} aria-label="NVIDIA"><svg width="16" height="14"><path d="M0 0h16v14H0z" fill="#1c2a10" /><path d="M6 1h10v12H6z" fill="#74b018" /><path d="M1 7c3-5 9-5 12 0-3 5-9 5-12 0zm3 0c2 3 5 3 7 0-2-3-5-3-7 0z" fill="#9fd63c" stroke="#24380c" strokeWidth=".7" /></svg></TaskButton>
          <TaskButton $w={24} aria-label="Агент"><svg width="16" height="16"><g fill="#f3c52c" stroke="#d8402a"><circle cx="4" cy="3.500" r="2.800" /><circle cx="12" cy="3.500" r="2.800" /><circle cx="3.500" cy="9" r="2.800" /><circle cx="12.500" cy="9" r="2.800" /><circle cx="5.500" cy="13" r="2.500" /><circle cx="10.500" cy="13" r="2.500" /></g><circle cx="8" cy="7.500" r="3.500" fill="#fff0c0" stroke="#d8402a" /></svg></TaskButton>
          <TaskButton $w={24} aria-label="Дисплей"><svg width="17" height="16"><path d="M.5.5h16v11H.5z" fill="#8f9097" stroke="#aeb0bc" /><path d="M0 14.500h7M9 14.500h7" stroke="#9da3cc" strokeWidth="2" /></svg></TaskButton>
          <TaskButton $w={24} aria-label="Батарея"><svg width="16" height="13" fill="none" stroke="#fff"><path d="M7 3.500h7.500v7h-9V8M15.500 5.500v3M1 3V0M4 3V0M.5 3.500h4v2l-2 1.500v3H5" /><path d="M8 5h3v4H8z" fill="#fff" stroke="none" /></svg></TaskButton>
          <TaskButton $w={24} aria-label="Звук"><svg width="17" height="14" fill="none" stroke="#fff"><path d="M.5 4.500h3L7.500 1v12l-4-3.500h-3z" /><path d="M9.500 5c1 1 1 3 0 4M11.500 3c2.500 2 2.500 6 0 8M13.500 1c3.500 3 3.500 9 0 12" /></svg></TaskButton>
          <TaskButton $w={24} aria-label="Сеть"><svg width="14" height="14" fill="none" stroke="#ddd"><path d="M1 13C1 6 6 1 13 1M4 13c0-5 4-9 9-9M7 13c0-3 3-6 6-6M10 13c0-2 1-3 3-3" /><circle cx="12" cy="12" r="1" fill="#fff" /></svg></TaskButton>
          <Language>РУС</Language>
          <Clock>22:16<br />22.11.2018</Clock>
          <TaskButton $w={48} aria-label="Уведомления"><svg width="25" height="24" viewBox="0 0 25 24"><path d="M0 0h17v13H7l-3.500 3.500V13H0z" fill="#fff" /><path d="M3 3.500h11M3 6.500h11M3 9.500h7" stroke="#333" /><circle cx="16" cy="15.500" r="8" fill="#3a3a3a" stroke="#bbb" /><text x="16" y="19.500" textAnchor="middle" fontFamily="Open Sans" fontSize="11" fill="#fff">3</text></svg></TaskButton>
          <ShowDesktop aria-label="Свернуть все окна" />
        </Tray>
      </Taskbar>
    </Screen>
  );
}
